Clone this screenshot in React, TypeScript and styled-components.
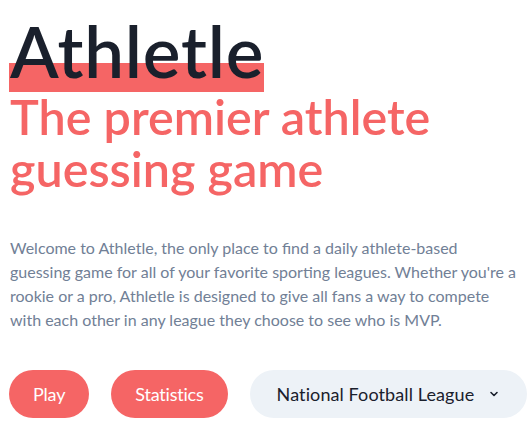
import React from "react";
import styled, { createGlobalStyle } from "styled-components";

const GlobalStyle = createGlobalStyle`
  html, body { margin: 0; padding: 0; background: #ffffff; }
  body { font-family: Lato, "Open Sans", sans-serif; }
  * { box-sizing: border-box; }
`;

const Page = styled.main`
  display: flex;
  flex-direction: column;
  align-items: flex-start;
  padding: 15px 0 0 9px;
`;

const Title = styled.h1`
  margin: 0;
  font-size: 71px;
  line-height: 72px;
  font-weight: 600;
  letter-spacing: 0.8px;
  color: #1a202c;
`;

const Highlight = styled.span`
  position: relative;
  display: inline-block;
  padding: 0 0 0 1px;
  z-index: 0;
  &::before {
    content: "";
    position: absolute;
    left: 0;
    right: 0;
    top: 48px;
    height: 29px;
    background: #f56565;
    z-index: -1;
  }
`;

const Subtitle = styled.h2`
  margin: 3px 0 0;
  padding-left: 1px;
  font-size: 48.5px;
  line-height: 52px;
  font-weight: 600;
  color: #f56565;
`;

const Intro = styled.p`
  margin: 42px 0 0;
  padding-left: 1px;
  width: 509px;
  font-size: 16px;
  line-height: 24px;
  color: #718096;
`;

const Actions = styled.div`
  display: flex;
  align-items: center;
  gap: 22px;
  margin-top: 38px;
`;

const Button = styled.button`
  height: 48px;
  padding: 0 24px;
  border: none;
  border-radius: 24px;
  background: #f56565;
  color: #ffffff;
  font-family: inherit;
  font-size: 18px;
  letter-spacing: -0.2px;
  cursor: pointer;
`;

const Select = styled.div`
  display: flex;
  align-items: center;
  justify-content: space-between;
  flex-shrink: 0;
  height: 48px;
  width: 277px;
  padding: 0 28px 0 27px;
  border-radius: 24px;
  background: #edf2f7;
  color: #1a202c;
  font-size: 18px;
  letter-spacing: 0.1px;
  white-space: nowrap;
`;

const Chevron = () => (
  <svg width="10" height="10" viewBox="0 0 10 10" fill="none">
    <path d="M2 3.5 L5 6.5 L8 3.5" stroke="#1a202c" strokeWidth="1.6" strokeLinecap="round" strokeLinejoin="round" />
  </svg>
);

export default function App() {
  return (
    <>
      <GlobalStyle />
      <Page>
        <Title>
          <Highlight>Athletle</Highlight>
        </Title>
        <Subtitle>
          The premier athlete
          <br />
          guessing game
        </Subtitle>
        <Intro>
          Welcome to Athletle, the only place to find a daily athlete-based guessing game for all of your favorite sporting
          leagues. Whether you're a rookie or a pro, Athletle is designed to give all fans a way to compete with each other in
          any league they choose to see who is MVP.
        </Intro>
        <Actions>
          <Button>Play</Button>
          <Button>Statistics</Button>
          <Select>
            <span>National Football League</span>
            <Chevron />
          </Select>
        </Actions>
      </Page>
    </>
  );
}
